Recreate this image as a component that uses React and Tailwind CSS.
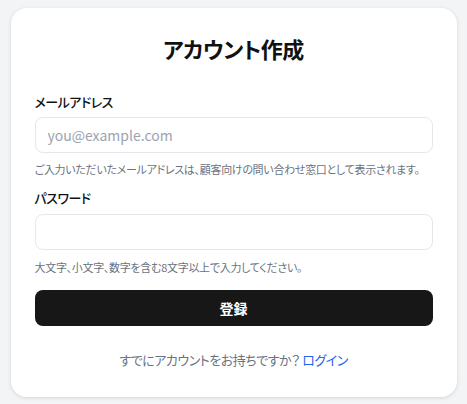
export default function App() {
  return (
    <div
      className="min-h-screen bg-[#f3f4f6] flex items-center justify-center px-[10px] [font-feature-settings:'palt'] text-[#111]"
      style={{ fontFamily: '"Noto Sans CJK JP", "Noto Sans", sans-serif' }}
    >
      <div className="w-full max-w-[446px] bg-white rounded-2xl shadow-[0_1px_4px_rgba(0,0,0,0.12)] px-6 pt-6 pb-[27px]">
        <h1 className="text-center text-[22px] font-semibold leading-8 tracking-[-0.5px] mb-7">アカウント作成</h1>

        <form className="flex flex-col" onSubmit={(e) => e.preventDefault()}>
          <label className="block text-[13px] font-medium leading-5 tracking-[-0.5px] mb-[5px]">メールアドレス</label>
          <input
            type="email"
            placeholder="you@example.com"
            className="w-full h-9 border border-[#e5e7eb] rounded-lg px-3 text-sm placeholder:text-[#9ca3af] focus:outline-none"
          />
          <p className="text-[11px] leading-4 tracking-[-0.3px] text-[#6b7280] mt-2 whitespace-nowrap">
            ご入力いただいたメールアドレスは、顧客向けの問い合わせ窓口として表示されます。
          </p>

          <label className="block text-[13px] font-medium leading-5 tracking-[-0.5px] mt-[11px] mb-1.5">パスワード</label>
          <input
            type="password"
            className="w-full h-9 border border-[#e5e7eb] rounded-lg px-3 text-sm focus:outline-none"
          />
          <p className="text-[11px] leading-4 tracking-[-0.3px] text-[#6b7280] mt-[9px] whitespace-nowrap">
            大文字、小文字、数字を含む8文字以上で入力してください。
          </p>

          <button
            type="submit"
            className="mt-[15px] w-full h-9 bg-[#171717] text-white rounded-lg text-sm font-semibold"
          >
            登録
          </button>
        </form>

        <p className="text-center text-[13px] leading-5 tracking-[-0.5px] text-[#6b7280] mt-6">
          すでにアカウントをお持ちですか？ <a href="#" className="text-[#2563eb]">ログイン</a>
        </p>
      </div>
    </div>
  )
}
